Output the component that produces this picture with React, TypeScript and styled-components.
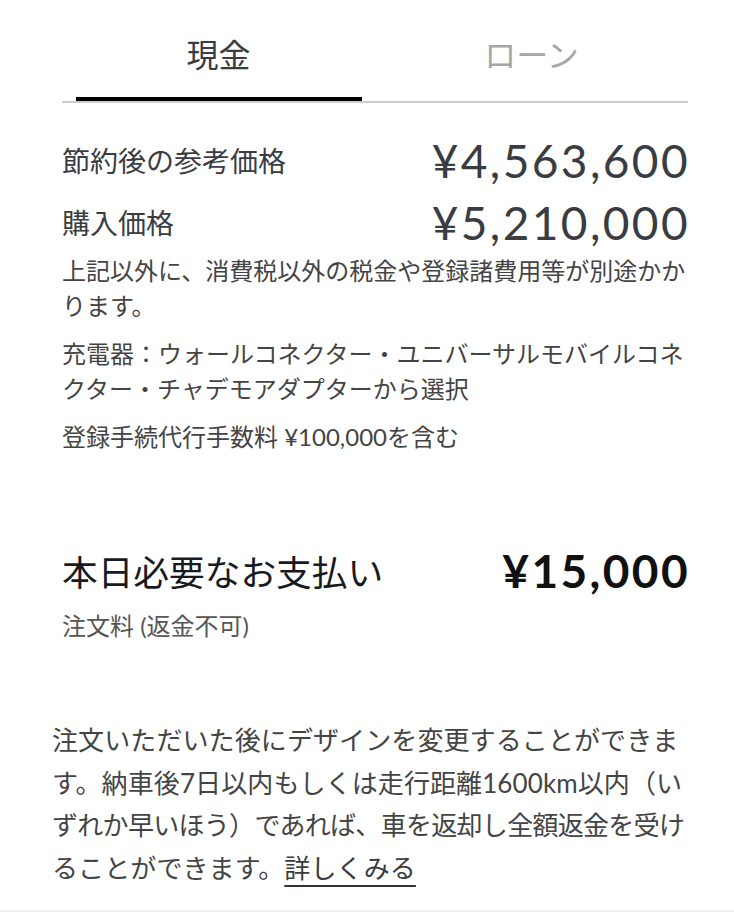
import React from "react";
import styled, { createGlobalStyle } from "styled-components";

const GlobalStyle = createGlobalStyle`
  html, body {
    margin: 0;
    padding: 0;
    background: #ffffff;
  }
  body {
    font-family: "Lato", "Noto Sans CJK JP", sans-serif;
    color: #393c41;
    -webkit-font-smoothing: antialiased;
  }
`;

const Page = styled.div`
  box-sizing: border-box;
  min-height: 912px;
  padding: 0 46px 0 52px;
  border-bottom: 2px solid #eeeeee;
  overflow: hidden;
`;

const TabBar = styled.div`
  display: grid;
  grid-template-columns: 1fr 1fr;
  margin-left: 10px;
  border-bottom: 2px solid #cccccc;
`;

const Tab = styled.div`
  display: flex;
  flex-direction: column;
  align-items: stretch;
  padding-top: 30px;
`;

const TabLabel = styled.div<{ $active?: boolean }>`
  font-family: "Noto Sans CJK JP", sans-serif;
  font-size: 32px;
  line-height: 46px;
  text-align: center;
  color: ${(p) => (p.$active ? "#393c41" : "#a5a6a8")};
`;

const TabIndicator = styled.div<{ $active?: boolean }>`
  height: 4px;
  margin: 21px 13px 0 14px;
  background: ${(p) => (p.$active ? "#000000" : "transparent")};
`;

const Section = styled.div`
  padding-left: 10px;
`;

const PriceList = styled(Section)`
  margin-top: 26px;
`;

const PriceRow = styled.div`
  display: flex;
  align-items: center;
  justify-content: space-between;
  height: 62px;
`;

const PriceLabel = styled.div`
  font-family: "Noto Sans CJK JP", sans-serif;
  font-size: 28px;
  color: #393c41;
`;

const PriceAmount = styled.div`
  font-family: "Lato", "Noto Sans CJK JP", sans-serif;
  font-size: 46px;
  font-weight: 400;
  letter-spacing: 2.4px;
  margin-right: -2px;
  color: #393c41;
`;

const Note = styled.p<{ $gap?: number }>`
  margin: ${(p) => p.$gap ?? 0}px 0 0 0;
  font-family: "Lato", "Noto Sans CJK JP", sans-serif;
  font-size: 24px;
  line-height: 35px;
  color: #444444;
`;

const DueSection = styled(Section)`
  margin-top: 86px;
`;

const DueRow = styled.div`
  display: flex;
  align-items: center;
  justify-content: space-between;
  height: 60px;
`;

const DueLabel = styled.div`
  font-family: "Noto Sans CJK JP", sans-serif;
  font-size: 35.7px;
  color: #171a20;
`;

const DueAmount = styled.div`
  font-family: "Lato", "Noto Sans CJK JP", sans-serif;
  font-size: 46px;
  font-weight: 700;
  letter-spacing: 2.4px;
  margin-right: -2px;
  color: #111111;
`;

const DueNote = styled.div`
  margin-top: 8px;
  font-family: "Lato", "Noto Sans CJK JP", sans-serif;
  font-size: 24px;
  line-height: 35px;
  color: #555555;
`;

const Disclaimer = styled.p`
  margin: 76px 0 0 0;
  font-family: "Lato", "Noto Sans CJK JP", sans-serif;
  font-size: 26px;
  line-height: 42.5px;
  white-space: nowrap;
  color: #444444;
`;

const DisclaimerLine = styled.span<{ $tight?: boolean }>`
  letter-spacing: ${(p) => (p.$tight ? "-0.7px" : "0.1px")};
`;

const MoreLink = styled.a`
  color: #393c41;
  text-decoration: underline;
  text-decoration-thickness: 2px;
  text-underline-offset: 7px;
  text-decoration-skip-ink: none;
  text-decoration-color: #333333;
  cursor: pointer;
`;

export default function App() {
  return (
    <>
      <GlobalStyle />
      <Page>
        <TabBar>
          <Tab>
            <TabLabel $active>現金</TabLabel>
            <TabIndicator $active />
          </Tab>
          <Tab>
            <TabLabel>ローン</TabLabel>
            <TabIndicator />
          </Tab>
        </TabBar>

        <PriceList>
          <PriceRow>
            <PriceLabel>節約後の参考価格</PriceLabel>
            <PriceAmount>¥4,563,600</PriceAmount>
          </PriceRow>
          <PriceRow>
            <PriceLabel>購入価格</PriceLabel>
            <PriceAmount>¥5,210,000</PriceAmount>
          </PriceRow>
          <Note>上記以外に、消費税以外の税金や登録諸費用等が別途かかります。</Note>
          <Note $gap={13}>
            充電器：ウォールコネクター・ユニバーサルモバイルコネクター・チャデモアダプターから選択
          </Note>
          <Note $gap={13}>登録手続代行手数料 ¥100,000を含む</Note>
        </PriceList>

        <DueSection>
          <DueRow>
            <DueLabel>本日必要なお支払い</DueLabel>
            <DueAmount>¥15,000</DueAmount>
          </DueRow>
          <DueNote>注文料 (返金不可)</DueNote>
        </DueSection>

        <Disclaimer>
          <DisclaimerLine>注文いただいた後にデザインを変更することができま</DisclaimerLine>
          <br />
          <DisclaimerLine>す。納車後7日以内もしくは走行距離1600km以内（い</DisclaimerLine>
          <br />
          <DisclaimerLine $tight>ずれか早いほう）であれば、車を返却し全額返金を受け</DisclaimerLine>
          <br />
          <DisclaimerLine>
            ることができます。<MoreLink>詳しくみる</MoreLink>
          </DisclaimerLine>
        </Disclaimer>
      </Page>
    </>
  );
}
